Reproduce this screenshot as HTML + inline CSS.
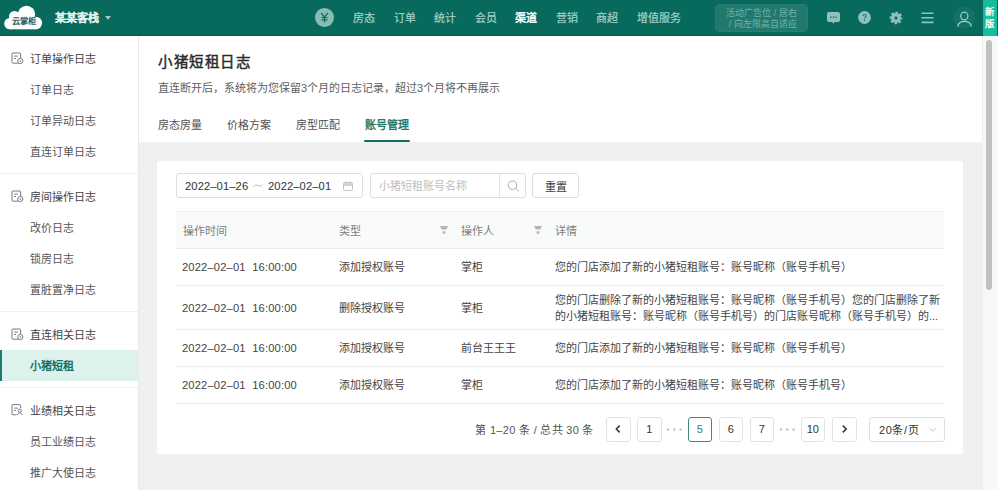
<!DOCTYPE html>
<html lang="zh-CN">
<head>
<meta charset="utf-8">
<style>
*{margin:0;padding:0;box-sizing:border-box}
html,body{width:998px;height:490px;overflow:hidden;background:#eff0f0;font-family:"Liberation Sans",sans-serif;color:#333}
#hd{position:absolute;left:0;top:0;width:998px;height:36px;background:#086a5d;box-shadow:inset 0 -2px 0 rgba(0,0,0,.08)}
#side{position:absolute;left:0;top:36px;width:139px;height:454px;background:#fff;border-right:1px solid #e8e8e8}
#top{position:absolute;left:139px;top:36px;width:843px;height:106px;background:#fff}
#card{position:absolute;left:157px;top:161px;width:806px;height:293px;background:#fff}
#sb{position:absolute;left:982px;top:36px;width:16px;height:454px;background:#f8f8f8;border-left:1px solid #ededed}
#thumb{position:absolute;left:986.3px;top:40px;width:6px;height:250px;border-radius:3px;background:#c1c1c1}
.t{position:absolute;white-space:nowrap;font-size:11px;line-height:16px}
.nav{position:absolute;top:10px;font-size:11px;line-height:16px;color:#a6d2ca;white-space:nowrap;-webkit-text-stroke:.2px #a6d2ca}
.nav.on{color:#fff;-webkit-text-stroke:.45px #fff}
.ad{position:absolute;left:715px;top:3.5px;width:93px;height:28px;border-radius:5px;background:rgba(255,255,255,.1);border:1px solid rgba(255,255,255,.04);color:rgba(200,235,228,.5);font-size:9px;line-height:11px;text-align:center;padding-top:3px}
.new{position:absolute;left:983px;top:0;width:14px;height:36px;background:#13bd9c;color:#f0fffb;font-size:9.5px;line-height:12px;text-align:center;padding-top:5.5px;font-weight:bold}
/* sidebar */
.grp{border-bottom:1px solid #efefef;padding:7px 0 6px}
.it{height:31px;line-height:33px;font-size:11px;color:#555;padding-left:30px;position:relative;white-space:nowrap}
.it.h{color:#444}
.it.on{background:#ddf2ed;color:#0f6b60;-webkit-text-stroke:.4px #0f6b60}
.it.on:before{content:"";position:absolute;left:0;top:0;width:2px;height:31px;background:#1f7a6e}
.ic{position:absolute;left:10px;top:9px}
.box{position:absolute;border:1px solid #dedede;border-radius:3px;background:#fff}
.dt{font-size:11.2px;color:#333;letter-spacing:.1px}
.th{color:#7d7d7d}
.td{color:#444}
.flt{position:absolute;top:225px;width:10px;height:10px}
.rl{position:absolute;left:176px;width:768px;height:1px;background:#eeeeee}
.pg{position:absolute;top:417px;width:24.5px;height:25px;border:1px solid #e3e3e3;border-radius:3px;background:#fff;font-size:11px;line-height:23px;text-align:center;color:#333}
.pg svg{position:absolute;left:-0.5px;top:-0.5px}
.pg.on{border-color:#3d8a7f;color:#2f7d72}
.dots{position:absolute;top:421px;font-size:11px;line-height:16px;color:#c4c4c4;letter-spacing:1px}
</style>
</head>
<body>
<div id="hd">
  <svg style="position:absolute;left:0;top:0" width="48" height="34" viewBox="0 0 48 34">
    <g fill="#fff"><circle cx="9.9" cy="23.6" r="5.7"/><circle cx="14.5" cy="16.5" r="5.5"/><circle cx="26.5" cy="14.3" r="8.6"/><circle cx="35.8" cy="23" r="6.3"/><rect x="9.9" y="17" width="26" height="12.3"/></g>
    <text x="23.8" y="24.2" font-size="8.2" font-weight="bold" fill="#2f6058" text-anchor="middle">云掌柜</text>
  </svg>
  <div class="t" style="left:55px;top:10px;font-size:11px;line-height:16px;color:#e3f3f0;font-weight:bold;-webkit-text-stroke:.12px #e3f3f0">某某客栈</div>
  <svg style="position:absolute;left:105px;top:16px" width="6" height="4"><path d="M0 0 L6 0 L3 3.8Z" fill="#9fcdc5"/></svg>
  <svg style="position:absolute;left:315px;top:8px" width="19" height="19" viewBox="0 0 19 19">
    <circle cx="9.5" cy="9.5" r="9.5" fill="#88bdb4"/>
    <path d="M6 4.8 L9.5 9 L13 4.8 M9.5 9 V14.5 M6.5 9.5 H12.5 M6.5 11.8 H12.5" stroke="#0b6b5f" stroke-width="1.2" fill="none"/>
  </svg>
  <div class="nav" style="left:353px">房态</div>
  <div class="nav" style="left:393.5px">订单</div>
  <div class="nav" style="left:434px">统计</div>
  <div class="nav" style="left:474.5px">会员</div>
  <div class="nav on" style="left:515px">渠道</div>
  <div class="nav" style="left:555.5px">营销</div>
  <div class="nav" style="left:596px">商超</div>
  <div class="nav" style="left:636.5px">增值服务</div>
  <div class="ad">活动广告位 / 居右<br>&nbsp;/ 向左限高自适应</div>
  <svg style="position:absolute;left:826px;top:11px" width="15" height="14" viewBox="0 0 15 14">
    <path d="M3 1 H12 Q14 1 14 3 V9 Q14 11 12 11 H8.8 L7.5 12.8 L6.2 11 H3 Q1 11 1 9 V3 Q1 1 3 1Z" fill="#8fc3ba"/>
    <circle cx="4.9" cy="6.2" r=".85" fill="#2f7a6e"/><circle cx="7.5" cy="6.2" r=".85" fill="#2f7a6e"/><circle cx="10.1" cy="6.2" r=".85" fill="#2f7a6e"/>
  </svg>
  <svg style="position:absolute;left:858px;top:11px" width="13" height="13" viewBox="0 0 13 13">
    <circle cx="6.5" cy="6.5" r="6.4" fill="#8fc3ba"/>
    <path d="M4.9 5 Q4.9 3.5 6.5 3.5 Q8.1 3.5 8.1 4.9 Q8.1 5.8 7.2 6.3 Q6.6 6.7 6.6 7.5" stroke="#1f6f63" stroke-width="1.1" fill="none"/>
    <circle cx="6.6" cy="9.3" r=".7" fill="#1f6f63"/>
  </svg>
  <svg style="position:absolute;left:888.6px;top:10.5px" width="14" height="14" viewBox="0 0 14 14">
    <circle cx="7" cy="7" r="4.9" fill="#8fc3ba"/>
    <circle cx="7" cy="7" r="5.45" fill="none" stroke="#8fc3ba" stroke-width="1.8" stroke-dasharray="2.483 1.798" stroke-dashoffset="1.241"/>
    <circle cx="7" cy="7" r="1.7" fill="#1d6f63"/>
  </svg>
  <svg style="position:absolute;left:921px;top:12px" width="13" height="12" viewBox="0 0 13 12">
    <path d="M0.5 1.2 H12.5 M0.5 5.8 H12.5 M0.5 10.4 H12.5" stroke="#8fc3ba" stroke-width="1.6"/>
  </svg>
  <svg style="position:absolute;left:953px;top:6px" width="23" height="23" viewBox="0 0 23 23">
    <circle cx="11.5" cy="11.6" r="11" fill="rgba(255,255,255,.045)"/>
    <ellipse cx="11.3" cy="10.1" rx="3.6" ry="3.9" stroke="#9fd0c6" stroke-width="1.2" fill="none"/>
    <path d="M4.9 20 Q6 15.4 11.5 15.4 Q17 15.4 18.2 20" stroke="#9fd0c6" stroke-width="1.3" fill="none" stroke-linecap="round"/>
  </svg>
  <div class="new">新<br>版</div>
</div>

<div id="side">
  <div class="grp">
    <div class="it h"><svg class="ic" width="14" height="14" viewBox="0 0 14 14"><path d="M8.5 11.2 H2.8 Q2 11.2 2 10.4 V1.8 Q2 1 2.8 1 H9.8 Q10.6 1 10.6 1.8 V6.2" stroke="#7a7a7a" stroke-width="1" fill="none"/><path d="M4.2 4.1 H7.8 M4.2 6.5 H6" stroke="#7a7a7a" stroke-width="1"/><circle cx="10.3" cy="9" r="2.6" stroke="#7a7a7a" stroke-width="1" fill="#fff"/><path d="M10.3 8 V10" stroke="#7a7a7a" stroke-width=".8"/></svg>订单操作日志</div>
    <div class="it">订单日志</div>
    <div class="it">订单异动日志</div>
    <div class="it">直连订单日志</div>
  </div>
  <div class="grp">
    <div class="it h"><svg class="ic" width="14" height="14" viewBox="0 0 14 14"><path d="M8.5 11.2 H2.8 Q2 11.2 2 10.4 V1.8 Q2 1 2.8 1 H9.8 Q10.6 1 10.6 1.8 V6.2" stroke="#7a7a7a" stroke-width="1" fill="none"/><path d="M4.2 4.1 H7.8 M4.2 6.5 H6" stroke="#7a7a7a" stroke-width="1"/><circle cx="10.3" cy="9" r="2.6" stroke="#7a7a7a" stroke-width="1" fill="#fff"/><path d="M10.3 8 V10" stroke="#7a7a7a" stroke-width=".8"/></svg>房间操作日志</div>
    <div class="it">改价日志</div>
    <div class="it">锁房日志</div>
    <div class="it">置脏置净日志</div>
  </div>
  <div class="grp">
    <div class="it h"><svg class="ic" width="14" height="14" viewBox="0 0 14 14"><path d="M8.5 11.2 H2.8 Q2 11.2 2 10.4 V1.8 Q2 1 2.8 1 H9.8 Q10.6 1 10.6 1.8 V6.2" stroke="#7a7a7a" stroke-width="1" fill="none"/><path d="M4.2 4.1 H7.8 M4.2 6.5 H6" stroke="#7a7a7a" stroke-width="1"/><circle cx="10.3" cy="9" r="2.6" stroke="#7a7a7a" stroke-width="1" fill="#fff"/><path d="M10.3 8 V10" stroke="#7a7a7a" stroke-width=".8"/></svg>直连相关日志</div>
    <div class="it on">小猪短租</div>
  </div>
  <div class="grp" style="border:0">
    <div class="it h"><svg class="ic" width="14" height="14" viewBox="0 0 14 14"><path d="M6.6 10.8 H2.8 Q2 10.8 2 10 V1.4 Q2 0.6 2.8 0.6 H9.8 Q10.6 0.6 10.6 1.4 V4" stroke="#7a7a7a" stroke-width="1" fill="none"/><path d="M4.2 4.1 H7.8 M4.2 6.5 H6" stroke="#7a7a7a" stroke-width="1"/><circle cx="9.7" cy="6.6" r="1.6" stroke="#7a7a7a" stroke-width="1" fill="none"/><path d="M7.2 10.9 Q8 8.7 9.7 8.7 Q11.4 8.7 12.4 10.9" stroke="#7a7a7a" stroke-width="1" fill="none"/></svg>业绩相关日志</div>
    <div class="it">员工业绩日志</div>
    <div class="it">推广大使日志</div>
  </div>
</div>

<div id="top">
  <div class="t" style="left:19px;top:16px;font-size:14.5px;line-height:20px;font-weight:normal;color:#2a2a2a;letter-spacing:1.6px;-webkit-text-stroke:.45px #2a2a2a">小猪短租日志</div>
  <div class="t" style="left:19px;top:44px;color:#606060">直连断开后，系统将为您保留3个月的日志记录，超过3个月将不再展示</div>
  <div class="t" style="left:19px;top:80.5px;color:#505050">房态房量</div>
  <div class="t" style="left:88px;top:80.5px;color:#505050">价格方案</div>
  <div class="t" style="left:157px;top:80.5px;color:#505050">房型匹配</div>
  <div class="t" style="left:226px;top:80.5px;color:#137466;-webkit-text-stroke:.35px #137466">账号管理</div>
  <div style="position:absolute;left:224.5px;top:104.3px;width:46px;height:2.2px;border-radius:1px;background:#11705f"></div>
</div>
<div id="card"></div>
<div class="box" style="left:176px;top:173px;width:187px;height:25px"></div>
<div class="t dt" style="left:185px;top:178px">2022–01–26</div>
<svg style="position:absolute;left:252.7px;top:183px" width="10" height="5" viewBox="0 0 10 5"><path d="M0.5 3.5 Q2.5 0.8 5 2.5 Q7.5 4.2 9.5 1.5" stroke="#b8b8b8" stroke-width="0.9" fill="none"/></svg>
<div class="t dt" style="left:268px;top:178px">2022–02–01</div>
<svg style="position:absolute;left:343px;top:181px" width="10" height="10" viewBox="0 0 10 10"><rect x="0.5" y="1.5" width="9" height="8" rx="0.8" stroke="#bdbdbd" stroke-width="0.9" fill="none"/><rect x="0.8" y="1.8" width="8.4" height="2.4" fill="#d6d6d6"/><path d="M0.5 4.4 H9.5" stroke="#bdbdbd" stroke-width="0.8"/><path d="M3 0.3 V2 M7 0.3 V2" stroke="#c4c4c4" stroke-width="0.9"/></svg>
<div class="box" style="left:370px;top:173px;width:156px;height:25px"></div>
<div style="position:absolute;left:499px;top:174px;width:1px;height:23px;background:#e3e3e3"></div>
<div class="t" style="left:379px;top:178px;color:#bdbdbd">小猪短租账号名称</div>
<svg style="position:absolute;left:506.5px;top:180px" width="13" height="12" viewBox="0 0 13 12"><circle cx="5.5" cy="5.2" r="4.3" stroke="#a8a8a8" stroke-width="1" fill="none"/><path d="M8.6 8.3 L11.6 11.2" stroke="#a8a8a8" stroke-width="1"/></svg>
<div class="box" style="left:532px;top:173px;width:47px;height:25px"></div>
<div class="t" style="left:544.5px;top:178.5px;color:#3a3a3a">重置</div>

<div style="position:absolute;left:176px;top:211px;width:768px;height:37.5px;background:#f9fafa;border-top:1px solid #f0f0f0;border-bottom:1px solid #ebebeb"></div>
<div class="t th" style="left:183px;top:222.5px">操作时间</div>
<div class="t th" style="left:339px;top:222.5px">类型</div>
<svg class="flt" style="left:439px"><path d="M1 1.1 H9.1 L7.4 4.6 H2.7Z" fill="#b5b5b5"/><rect x="3.6" y="6.3" width="2.8" height="2.4" fill="#b5b5b5"/></svg>
<div class="t th" style="left:461px;top:222.5px">操作人</div>
<svg class="flt" style="left:533px"><path d="M1 1.1 H9.1 L7.4 4.6 H2.7Z" fill="#b5b5b5"/><rect x="3.6" y="6.3" width="2.8" height="2.4" fill="#b5b5b5"/></svg>
<div class="t th" style="left:555px;top:222.5px">详情</div>

<div class="rl" style="top:285px"></div>
<div class="rl" style="top:329px"></div>
<div class="rl" style="top:366px"></div>
<div class="rl" style="top:403px"></div>

<div class="t td" style="left:182px;top:259px"><span style="font-size:11.2px;letter-spacing:.15px">2022–02–01&nbsp;&nbsp;16:00:00</span></div>
<div class="t td" style="left:339px;top:259px">添加授权账号</div>
<div class="t td" style="left:461px;top:259px">掌柜</div>
<div class="t td" style="left:555px;top:259px">您的门店添加了新的小猪短租账号：账号昵称（账号手机号）</div>

<div class="t td" style="left:182px;top:299.5px"><span style="font-size:11.2px;letter-spacing:.15px">2022–02–01&nbsp;&nbsp;16:00:00</span></div>
<div class="t td" style="left:339px;top:299.5px">删除授权账号</div>
<div class="t td" style="left:461px;top:299.5px">掌柜</div>
<div class="t td" style="left:555px;top:292px">您的门店删除了新的小猪短租账号：账号昵称（账号手机号）您的门店删除了新<br>的小猪短租账号：账号昵称（账号手机号）的门店账号昵称（账号手机号）的...</div>

<div class="t td" style="left:182px;top:340px"><span style="font-size:11.2px;letter-spacing:.15px">2022–02–01&nbsp;&nbsp;16:00:00</span></div>
<div class="t td" style="left:339px;top:340px">添加授权账号</div>
<div class="t td" style="left:461px;top:340px">前台王王王</div>
<div class="t td" style="left:555px;top:340px">您的门店添加了新的小猪短租账号：账号昵称（账号手机号）</div>

<div class="t td" style="left:182px;top:377px"><span style="font-size:11.2px;letter-spacing:.15px">2022–02–01&nbsp;&nbsp;16:00:00</span></div>
<div class="t td" style="left:339px;top:377px">添加授权账号</div>
<div class="t td" style="left:461px;top:377px">掌柜</div>
<div class="t td" style="left:555px;top:377px">您的门店添加了新的小猪短租账号：账号昵称（账号手机号）</div>

<div class="t" style="left:475.3px;top:421.5px;color:#555;letter-spacing:.3px">第 1–20 条 / 总共 30 条</div>
<div class="pg" style="left:606px"><svg width="24" height="24" viewBox="0 0 24 24"><path d="M12.7 7.6 L9.3 11 L12.7 14.4" stroke="#333" stroke-width="1.5" fill="none"/></svg></div>
<div class="pg" style="left:637px">1</div>
<svg style="position:absolute;left:666.3px;top:428px" width="17" height="3" viewBox="0 0 17 3"><circle cx="2" cy="1.5" r="1.2" fill="#c2c2c2"/><circle cx="8.3" cy="1.5" r="1.2" fill="#c2c2c2"/><circle cx="14.6" cy="1.5" r="1.2" fill="#c2c2c2"/></svg>
<div class="pg on" style="left:687.5px">5</div>
<div class="pg" style="left:718.5px">6</div>
<div class="pg" style="left:749.5px">7</div>
<svg style="position:absolute;left:779px;top:428px" width="17" height="3" viewBox="0 0 17 3"><circle cx="2" cy="1.5" r="1.2" fill="#c2c2c2"/><circle cx="8.3" cy="1.5" r="1.2" fill="#c2c2c2"/><circle cx="14.6" cy="1.5" r="1.2" fill="#c2c2c2"/></svg>
<div class="pg" style="left:800.5px">10</div>
<div class="pg" style="left:832px"><svg width="24" height="24" viewBox="0 0 24 24"><path d="M9.8 7.6 L13.2 11 L9.8 14.4" stroke="#333" stroke-width="1.5" fill="none"/></svg></div>
<div class="box" style="left:869px;top:417px;width:75.5px;height:25px"></div>
<div class="t" style="left:879px;top:422px;color:#333;letter-spacing:.6px">20条/页</div>
<svg style="position:absolute;left:928.5px;top:426.5px" width="8" height="6" viewBox="0 0 8 6"><path d="M0.5 0.8 L3.8 4.3 L7.1 0.8" stroke="#c0c0c0" stroke-width="0.9" fill="none"/></svg>
<div id="sb"></div>
<div id="thumb"></div>
</body>
</html>
